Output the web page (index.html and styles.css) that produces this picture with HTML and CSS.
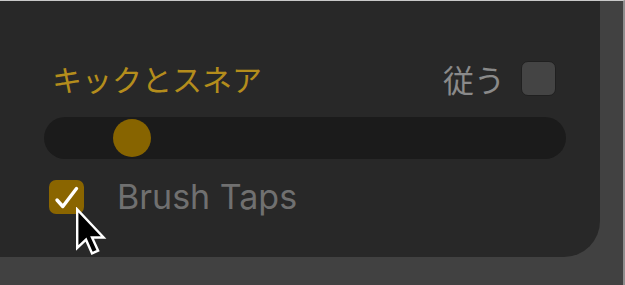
FILE: index.html
```html
<!DOCTYPE html>
<html lang="ja">
<head>
  <meta charset="UTF-8" />
  <meta name="viewport" content="width=device-width, initial-scale=1" />
  <title>キックとスネア</title>
  <link rel="stylesheet" href="styles.css">
</head>
<body>

  <!-- Drum panel -->
  <div class="frame">
    <section class="panel">

      <div class="header">
        <span class="title">キックとスネア</span>
        <label class="follow">
          従う
          <span class="box"></span>
        </label>
      </div>

      <div class="track">
        <span class="knob"></span>
      </div>

      <label class="option">
        <span class="check">
          <svg width="35" height="34" viewBox="0 0 35 34">
            <path d="M8 20 L13.8 26.5 L27.5 8.5" fill="none" stroke="#fff" stroke-width="3.4" stroke-linecap="round" stroke-linejoin="round" />
          </svg>
        </span>
        <span class="option-text">Brush Taps</span>

        <!-- mouse pointer -->
        <svg class="pointer" width="33" height="51" viewBox="0 0 30 46">
          <path d="M2 2 L2 37 L10 29.5 L15.5 42 L21 39.5 L15.5 27.5 L26 27.5 Z" fill="#000" stroke="#fff" stroke-width="2.2" stroke-linejoin="miter" />
        </svg>
      </label>

    </section>
  </div>

</body>
</html>
```

FILE: styles.css
```css
* {
  margin: 0;
  padding: 0;
  box-sizing: border-box;
}

body {
  background: #414141;
  font-family: Inter, "Noto Sans CJK JP", sans-serif;
  width: 625px;
  height: 285px;
  overflow: hidden;
}

.frame {
  border-top: 1px solid #c9c9c9;
  border-right: 2px solid #8d8d8d;
  height: 285px;
  width: 625px;
}

.panel {
  width: 600px;
  height: 256px;
  background: #282828;
  border-bottom-right-radius: 36px;
  padding: 55px 34px 0 44px;
}

.header {
  display: flex;
  justify-content: space-between;
  align-items: center;
  padding: 0 10px 0 8px;
  height: 44px;
}

.title {
  font-family: "Noto Sans CJK JP", sans-serif;
  font-size: 30px;
  color: #b48d1c;
}

.follow {
  display: flex;
  align-items: center;
  gap: 16px;
  font-family: "Noto Sans CJK JP", sans-serif;
  font-size: 31px;
  color: #8a8a8a;
}

.box {
  width: 35px;
  height: 35px;
  background: #444;
  border: 1px solid #202020;
  border-radius: 7px;
}

.track {
  margin-top: 17px;
  height: 42px;
  background: #1b1b1b;
  border-radius: 21px;
  display: flex;
  align-items: center;
  padding-left: 69px;
}

.knob {
  width: 38px;
  height: 38px;
  border-radius: 50%;
  background: #876400;
}

.option {
  position: relative;
  display: flex;
  align-items: center;
  margin-top: 21px;
  padding-left: 5px;
  gap: 33px;
}

.check {
  width: 35px;
  height: 34px;
  background: #8a6500;
  border-radius: 7px;
  display: flex;
}

.option-text {
  font-size: 34px;
  color: #707070;
  line-height: 34px;
}

.pointer {
  position: absolute;
  left: 31px;
  top: 27px;
}
```
